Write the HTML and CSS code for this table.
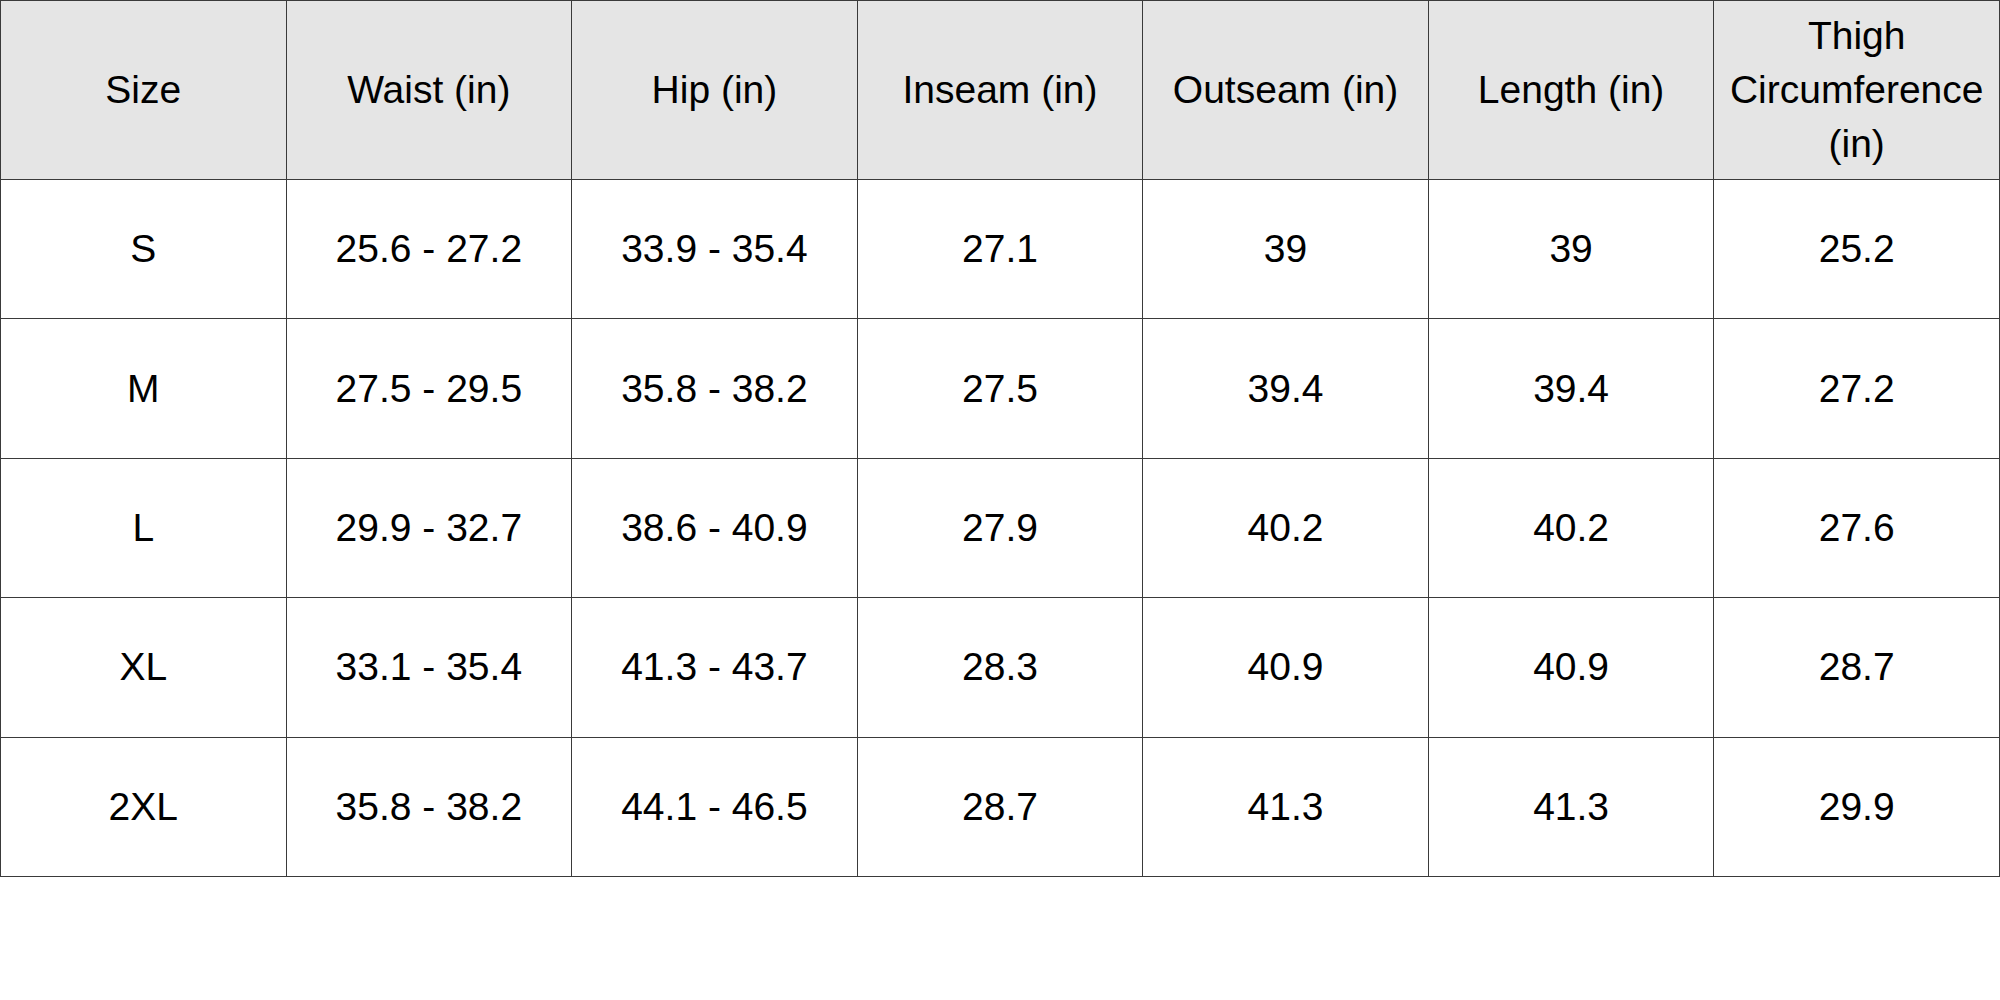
FILE: index.html
```html
<!DOCTYPE html>
<html>
<head>
<meta charset="utf-8">
<link rel="stylesheet" href="styles.css">
</head>
<body>
<table class="size-table">
  <thead>
    <tr class="head-row">
      <th>Size</th>
      <th>Waist (in)</th>
      <th>Hip (in)</th>
      <th>Inseam (in)</th>
      <th>Outseam (in)</th>
      <th>Length (in)</th>
      <th>Thigh Circumference (in)</th>
    </tr>
  </thead>
  <tbody>
    <tr><td>S</td><td>25.6 - 27.2</td><td>33.9 - 35.4</td><td>27.1</td><td>39</td><td>39</td><td>25.2</td></tr>
    <tr><td>M</td><td>27.5 - 29.5</td><td>35.8 - 38.2</td><td>27.5</td><td>39.4</td><td>39.4</td><td>27.2</td></tr>
    <tr><td>L</td><td>29.9 - 32.7</td><td>38.6 - 40.9</td><td>27.9</td><td>40.2</td><td>40.2</td><td>27.6</td></tr>
    <tr><td>XL</td><td>33.1 - 35.4</td><td>41.3 - 43.7</td><td>28.3</td><td>40.9</td><td>40.9</td><td>28.7</td></tr>
    <tr><td>2XL</td><td>35.8 - 38.2</td><td>44.1 - 46.5</td><td>28.7</td><td>41.3</td><td>41.3</td><td>29.9</td></tr>
  </tbody>
</table>
</body>
</html>
```
FILE: styles.css
```css
html, body {
  margin: 0;
  padding: 0;
  background: #ffffff;
}

.size-table {
  width: 2000px;
  table-layout: fixed;
  border-collapse: collapse;
  font-family: "Liberation Sans", Arial, sans-serif;
  font-size: 39px;
  color: #000000;
}

.size-table th,
.size-table td {
  border: 1px solid #3a3a3a;
  text-align: center;
  vertical-align: middle;
  padding: 0 4px;
  line-height: 54px;
  font-weight: normal;
}

.size-table th {
  background: #e5e5e5;
}

.head-row {
  height: 179px;
}

.size-table tbody tr {
  height: 139.4px;
}
```
